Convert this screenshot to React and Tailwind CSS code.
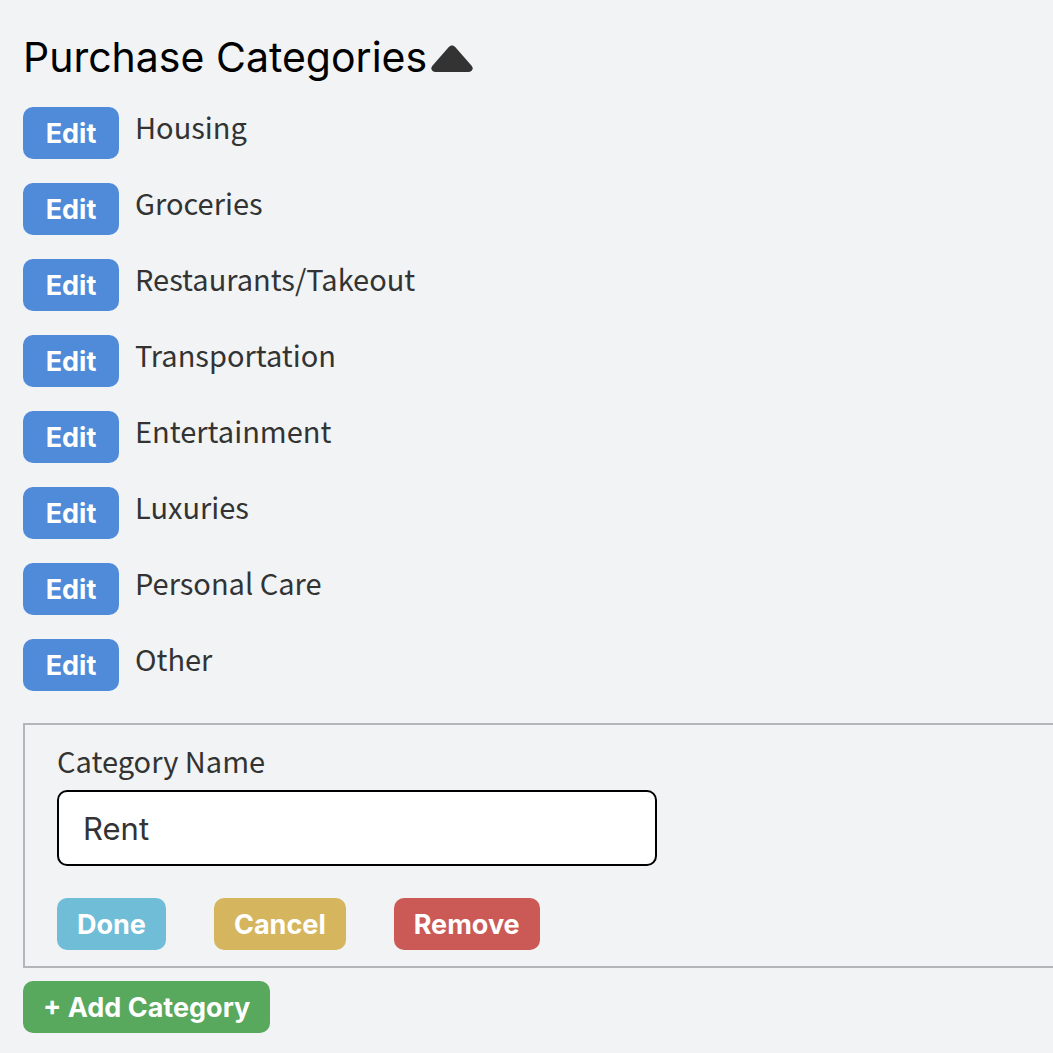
import { useState } from "react";

const categories = [
  "Housing",
  "Groceries",
  "Restaurants/Takeout",
  "Transportation",
  "Entertainment",
  "Luxuries",
  "Personal Care",
  "Other",
];

const buttonBase =
  "h-[52px] rounded-[10px] px-5 pt-0.5 font-['Inter',sans-serif] text-[27px] leading-8 font-bold text-white";

export default function App() {
  const [name, setName] = useState("Rent");
  const [open, setOpen] = useState(true);

  return (
    <main className="min-h-screen overflow-hidden bg-[#f1f3f5] pt-8 pb-5 pl-[23px] font-['Noto_Sans_CJK_SC','Noto_Sans',sans-serif] text-[#333333]">
      <h1 className="font-['Inter',sans-serif] text-[41px] leading-[51px] text-black">
        <button
          type="button"
          aria-expanded={open}
          onClick={() => setOpen(!open)}
          className="flex items-center gap-1"
        >
          Purchase Categories
          <svg viewBox="0 0 42 28" className="h-7 w-[42px]" aria-hidden="true">
            <path
              d="M17.6 3.2 1.2 21.9C-.7 24.3.7 28 4 28h34c3.3 0 4.7-3.7 2.8-6.1L24.4 3.2C22.3.9 19.7.9 17.6 3.2Z"
              fill="#333333"
            />
          </svg>
        </button>
      </h1>

      {open && (
        <ul className="mt-6 flex flex-col gap-6">
          {categories.map((category) => (
            <li key={category} className="flex items-start gap-4">
              <button type="button" className={`${buttonBase} w-24 bg-[#4f8bd9]`}>
                Edit
              </button>
              <span className="text-[29px] leading-[38px]">{category}</span>
            </li>
          ))}
        </ul>
      )}

      <form
        onSubmit={(event) => event.preventDefault()}
        className="mt-8 border-y-2 border-l-2 border-[#b3b5b8] px-8 pt-4 pb-4"
      >
        <label htmlFor="category-name" className="block text-[29px] leading-[38px]">
          Category Name
        </label>
        <input
          id="category-name"
          type="text"
          value={name}
          onChange={(event) => setName(event.target.value)}
          className="mt-[11px] block h-19 w-full max-w-[600px] rounded-[10px] border-2 border-black bg-white px-6 font-['Inter',sans-serif] text-[31px] outline-none"
        />
        <div className="mt-8 flex gap-12">
          <button type="submit" className={`${buttonBase} bg-[#6fbdd7]`}>
            Done
          </button>
          <button type="button" className={`${buttonBase} bg-[#d5b65f]`}>
            Cancel
          </button>
          <button type="button" className={`${buttonBase} bg-[#cb5956]`}>
            Remove
          </button>
        </div>
      </form>

      <button type="button" className={`${buttonBase} mt-[13px] bg-[#58a85d]`}>
        + Add Category
      </button>
    </main>
  );
}
